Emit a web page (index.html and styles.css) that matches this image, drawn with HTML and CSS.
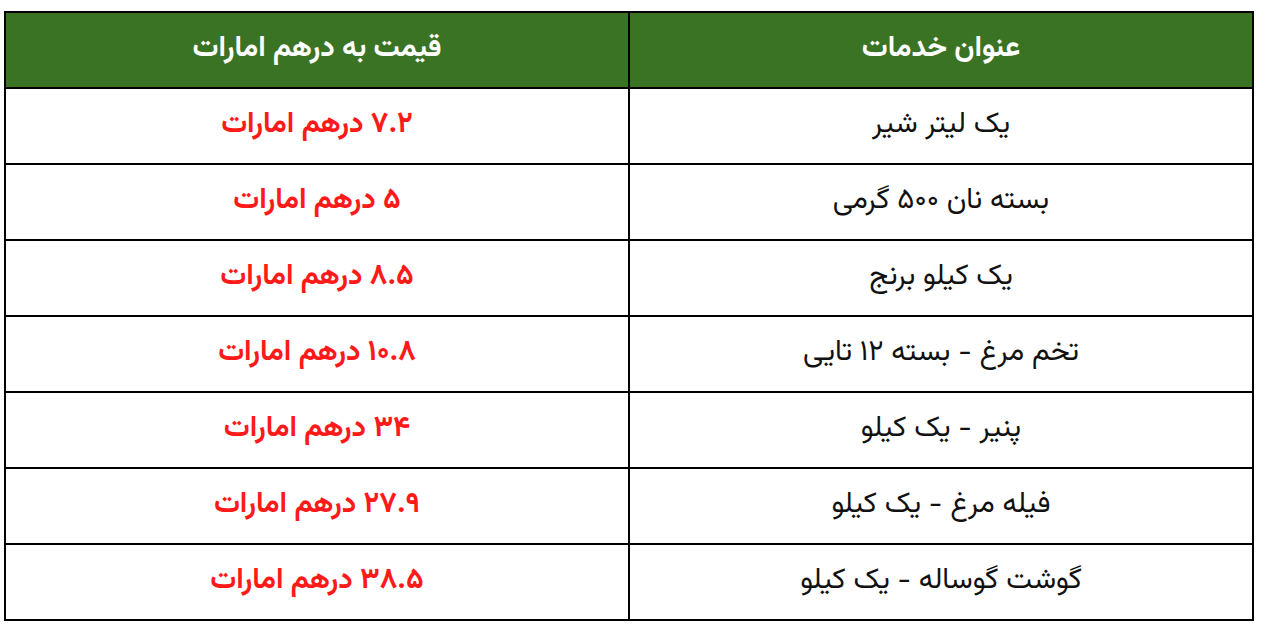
FILE: index.html
```html
<!DOCTYPE html>
<html lang="fa" dir="rtl">
<head>
<meta charset="utf-8">
<link rel="stylesheet" href="styles.css">
</head>
<body>
<table class="prices">
  <thead>
    <tr><th>عنوان خدمات</th><th>قیمت به درهم امارات</th></tr>
  </thead>
  <tbody>
    <tr><td>یک لیتر شیر</td><td class="price">۷.۲ درهم امارات</td></tr>
    <tr><td>بسته نان ۵۰۰ گرمی</td><td class="price">۵ درهم امارات</td></tr>
    <tr><td>یک کیلو برنج</td><td class="price">۸.۵ درهم امارات</td></tr>
    <tr><td>تخم مرغ - بسته ۱۲ تایی</td><td class="price">۱۰.۸ درهم امارات</td></tr>
    <tr><td>پنیر - یک کیلو</td><td class="price">۳۴ درهم امارات</td></tr>
    <tr><td>فیله مرغ - یک کیلو</td><td class="price">۲۷.۹ درهم امارات</td></tr>
    <tr><td>گوشت گوساله - یک کیلو</td><td class="price">۳۸.۵ درهم امارات</td></tr>
  </tbody>
</table>
</body>
</html>
```
FILE: styles.css
```css
html, body {
  margin: 0;
  padding: 0;
  background: #ffffff;
}
body {
  padding: 11px 11px 0 0;
  font-family: "Vazirmatn", "Noto Sans Arabic", "DejaVu Sans", sans-serif;
}
.prices {
  border-collapse: collapse;
  width: 1250px;
  table-layout: fixed;
}
.prices th,
.prices td {
  border: 2px solid #000000;
  height: 71px;
  padding: 0 0 3px 0;
  text-align: center;
  vertical-align: middle;
  font-size: 29px;
  width: 50%;
}
.prices th {
  background: #3b7324;
  color: #ffffff;
  font-weight: bold;
}
.prices td {
  color: #111111;
}
.prices td.price {
  color: #ff1a1a;
  font-weight: bold;
}
```
